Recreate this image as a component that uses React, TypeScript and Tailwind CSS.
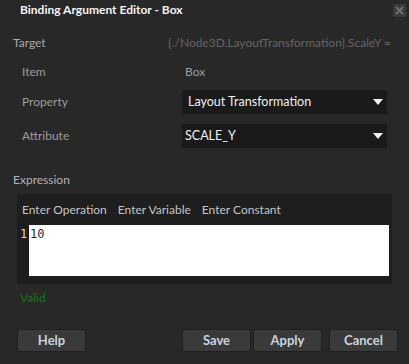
const font = { fontFamily: 'Lato, "Noto Sans", sans-serif' };

function Caret() {
  return (
    <svg width="10" height="6" viewBox="0 0 10 6" className="shrink-0">
      <path d="M0 0 H10 L5 6 Z" fill="#f2f2f2" />
    </svg>
  );
}

function Dropdown({ value, pad }: { value: string; pad: string }) {
  return (
    <div className={`flex h-[24px] w-[205px] items-center justify-between bg-[#1a1a1a] pr-[4px] ${pad}`}>
      <span className="text-[12.5px] text-[#f0f0f0]">{value}</span>
      <Caret />
    </div>
  );
}

function Button({ label, className = '' }: { label: string; className?: string }) {
  return (
    <button className={`flex h-[23px] w-[69px] items-center justify-center rounded-[3px] border border-[#1f1f1f] bg-[#3a3a3a] text-[13px] font-bold text-[#cbd3dc] ${className}`}>
      {label}
    </button>
  );
}

export default function App() {
  return (
    <div className="flex h-[364px] w-[409px] flex-col bg-[#282828]" style={font}>
      {/* Title bar */}
      <div className="flex h-[19px] items-center justify-between pl-[20px] pr-[3px]">
        <span className="text-[12px] font-bold text-[#f4f4f4]">Binding Argument Editor - Box</span>
        <div className="mt-[2px] flex h-[13px] w-[13px] items-center justify-center bg-[#3a3a3a]">
          <svg width="9" height="9" viewBox="0 0 9 9">
            <path d="M1 1 L8 8 M8 1 L1 8" stroke="#707070" strokeWidth="2" />
          </svg>
        </div>
      </div>

      {/* Target */}
      <div className="mt-[15px] flex h-[18px] items-center justify-between pl-[13px] pr-[18px] text-[12px]">
        <span className="text-[#a8a8a8]">Target</span>
        <span className="text-[#666666]">{'{./Node3D.LayoutTransformation}.ScaleY ='}</span>
      </div>

      {/* Item */}
      <div className="mt-[11px] flex h-[18px] items-center pl-[22px] text-[12px]">
        <span className="w-[163px] text-[#9c9c9c]">Item</span>
        <span className="text-[#9c9c9c]">Box</span>
      </div>

      {/* Property */}
      <div className="mt-[9px] flex items-center pl-[22px] text-[12px]">
        <span className="w-[160px] text-[#9c9c9c]">Property</span>
        <Dropdown value="Layout Transformation" pad="pl-[6px]" />
      </div>

      {/* Attribute */}
      <div className="mt-[10px] flex items-center pl-[22px] text-[12px]">
        <span className="w-[160px] text-[#9c9c9c]">Attribute</span>
        <Dropdown value="SCALE_Y" pad="pl-[3px]" />
      </div>

      {/* Expression */}
      <div className="mt-[23px] flex h-[18px] items-center pl-[13px] text-[12px] text-[#b4b4b4]">Expression</div>

      <div className="ml-[17px] mt-[5px] flex h-[90px] w-[375px] flex-col bg-[#1e1e1e] pb-[8px]">
        <div className="flex h-[31px] items-center gap-[11px] pl-[5px] text-[12px] text-[#c4c4c4]">
          <span>Enter Operation</span>
          <span>Enter Variable</span>
          <span>Enter Constant</span>
        </div>
        <div className="flex flex-1">
          <div
            className="w-[12px] pl-[3px] pt-[2px] text-[12px] leading-[15px] text-[#efd2a8]"
            style={{ fontFamily: '"DejaVu Sans Mono", monospace' }}
          >
            1
          </div>
          <div
            className="flex-1 bg-white pl-[1px] pt-[2px] text-[12px] leading-[15px] text-[#1c2c44]"
            style={{ fontFamily: '"DejaVu Sans Mono", monospace' }}
          >
            10
          </div>
          <div className="w-[3px]" />
        </div>
      </div>

      {/* Status */}
      <div className="mt-[5px] flex h-[18px] items-center pl-[20px] text-[12px] text-[#127a12]">Valid</div>

      {/* Buttons */}
      <div className="mt-[22px] flex items-center pl-[17px] pr-[11px]">
        <Button label="Help" />
        <div className="flex-1" />
        <Button label="Save" />
        <Button label="Apply" className="ml-[2px]" />
        <Button label="Cancel" className="ml-[7px]" />
      </div>
    </div>
  );
}
